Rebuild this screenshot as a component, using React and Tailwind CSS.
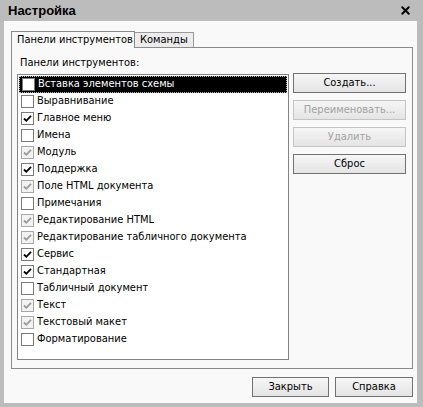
import { X } from 'lucide-react'

const items = [
  ['Вставка элементов схемы', 'off'],
  ['Выравнивание', 'off'],
  ['Главное меню', 'on'],
  ['Имена', 'off'],
  ['Модуль', 'dim'],
  ['Поддержка', 'on'],
  ['Поле HTML документа', 'dim'],
  ['Примечания', 'off'],
  ['Редактирование HTML', 'dim'],
  ['Редактирование табличного документа', 'dim'],
  ['Сервис', 'on'],
  ['Стандартная', 'on'],
  ['Табличный документ', 'off'],
  ['Текст', 'dim'],
  ['Текстовый макет', 'dim'],
  ['Форматирование', 'off'],
]

function Check({ state }) {
  const dim = state === 'dim'
  return (
    <span
      className={`flex h-[13px] w-[13px] shrink-0 items-center justify-center border ${
        dim ? 'border-[#a8a8a8] bg-[#f2f2f2]' : 'border-[#7a7a7a] bg-white'
      }`}
    >
      {state !== 'off' && (
        <svg width="9" height="9" viewBox="0 0 9 9">
          <path
            d="M1 4.5 L3.3 6.8 L8 1.8"
            fill="none"
            stroke={dim ? '#9a9a9a' : '#000'}
            strokeWidth="1.8"
          />
        </svg>
      )}
    </span>
  )
}

function Btn({ children, disabled, className = '' }) {
  return (
    <div
      className={`flex h-[20px] items-center justify-center border bg-gradient-to-b from-[#f6f6f6] to-[#e4e4e4] ${
        disabled ? 'border-[#c4c4c4] text-[#a2a2a2]' : 'border-[#717171] text-black'
      } ${className}`}
    >
      {children}
    </div>
  )
}

export default function App() {
  return (
    <div
      className="flex h-[407px] w-[423px] flex-col bg-[#bcbcbc] text-[11px] text-black"
      style={{ fontFamily: '"DejaVu Sans Condensed", "DejaVu Sans", sans-serif', fontStretch: 'condensed' }}
    >
      <div className="flex h-[21px] shrink-0 items-center justify-between pl-[8px] pr-[11px]">
        <span className="text-[13px] font-bold" style={{ fontFamily: '"Liberation Sans", Arial, sans-serif', fontStretch: 'normal' }}>
          Настройка
        </span>
        <X size={13} strokeWidth={3.5} />
      </div>
      <div className="mb-[4px] ml-[4px] mr-[6px] flex flex-1 flex-col bg-[#f9f9f9] pl-[7px] pr-[4px] pt-[10px]">
        <div className="flex h-[16px] items-end whitespace-nowrap">
          <div className="relative z-10 -mb-px flex h-[17px] w-[124px] items-center border border-b-0 border-[#8a8a8a] bg-[#f9f9f9] pl-[5px]">
            Панели инструментов
          </div>
          <div className="flex h-[15px] w-[59px] items-center border border-b-0 border-l-0 border-[#9a9a9a] bg-[#ececec] pl-[5px]">
            Команды
          </div>
        </div>
        <div className="flex h-[322px] flex-col border border-[#8a8a8a] pl-[5px] pt-[8px]">
          <div className="ml-[3px] h-[18px] leading-[14px]">Панели инструментов:</div>
          <div className="flex gap-[4px]">
            <div className="h-[286px] w-[272px] border border-[#848484] bg-white p-[1px]">
              {items.map(([label, state], i) => (
                <div
                  key={label}
                  className={`flex h-[17px] items-center gap-[3px] whitespace-nowrap pl-[2px] ${
                    i === 0 ? 'border border-dotted border-[#bbbbbb] bg-black pl-[1px] text-white' : ''
                  }`}
                >
                  <Check state={state} />
                  <span className="overflow-hidden">{label}</span>
                </div>
              ))}
            </div>
            <div className="-mt-px flex w-[113px] flex-col gap-[7px]">
              <Btn>Создать...</Btn>
              <Btn disabled>Переименовать...</Btn>
              <Btn disabled>Удалить</Btn>
              <Btn>Сброс</Btn>
            </div>
          </div>
        </div>
        <div className="mt-[8px] flex justify-end gap-[6px]">
          <Btn className="w-[77px]">Закрыть</Btn>
          <Btn className="w-[78px]">Справка</Btn>
        </div>
      </div>
    </div>
  )
}
